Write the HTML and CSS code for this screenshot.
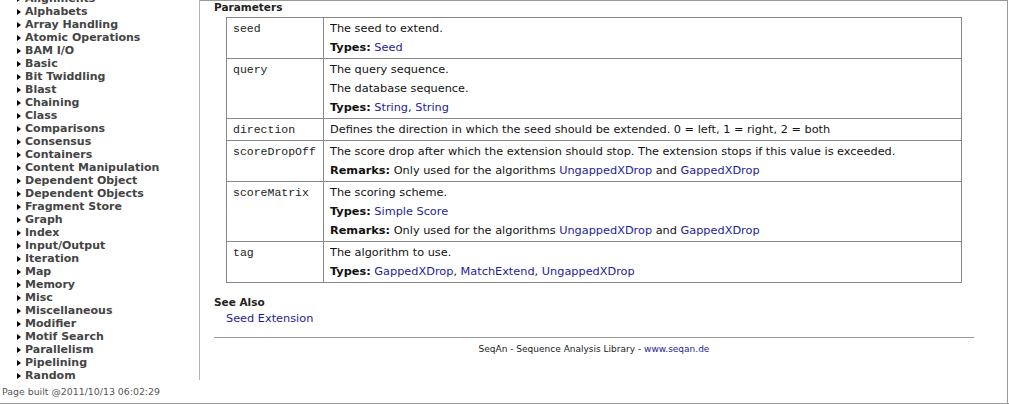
FILE: index.html
```html
<!DOCTYPE html>
<html>
<head>
<meta charset="utf-8">
<link rel="stylesheet" href="styles.css">
</head>
<body>
<div class="page">
  <div class="sidebar">
    <div class="navbox">
      <ul class="nav">
        <li>Alignments</li>
        <li>Alphabets</li>
        <li>Array Handling</li>
        <li>Atomic Operations</li>
        <li>BAM I/O</li>
        <li>Basic</li>
        <li>Bit Twiddling</li>
        <li>Blast</li>
        <li>Chaining</li>
        <li>Class</li>
        <li>Comparisons</li>
        <li>Consensus</li>
        <li>Containers</li>
        <li>Content Manipulation</li>
        <li>Dependent Object</li>
        <li>Dependent Objects</li>
        <li>Fragment Store</li>
        <li>Graph</li>
        <li>Index</li>
        <li>Input/Output</li>
        <li>Iteration</li>
        <li>Map</li>
        <li>Memory</li>
        <li>Misc</li>
        <li>Miscellaneous</li>
        <li>Modifier</li>
        <li>Motif Search</li>
        <li>Parallelism</li>
        <li>Pipelining</li>
        <li>Random</li>
      </ul>
    </div>
    <div class="built">Page built @2011/10/13 06:02:29</div>
  </div>
  <div class="main">
    <h3 class="heading">Parameters</h3>
    <table class="params">
      <tr>
        <td class="name">seed</td>
        <td class="desc"><p>The seed to extend.</p><p><b>Types:</b> <a href="#">Seed</a></p></td>
      </tr>
      <tr>
        <td class="name">query</td>
        <td class="desc"><p>The query sequence.</p><p>The database sequence.</p><p><b>Types:</b> <a href="#">String</a>, <a href="#">String</a></p></td>
      </tr>
      <tr>
        <td class="name">direction</td>
        <td class="desc"><p>Defines the direction in which the seed should be extended. 0 = left, 1 = right, 2 = both</p></td>
      </tr>
      <tr>
        <td class="name">scoreDropOff</td>
        <td class="desc"><p>The score drop after which the extension should stop. The extension stops if this value is exceeded.</p><p><b>Remarks:</b> Only used for the algorithms <a href="#">UngappedXDrop</a> and <a href="#">GappedXDrop</a></p></td>
      </tr>
      <tr>
        <td class="name">scoreMatrix</td>
        <td class="desc"><p>The scoring scheme.</p><p><b>Types:</b> <a href="#">Simple Score</a></p><p><b>Remarks:</b> Only used for the algorithms <a href="#">UngappedXDrop</a> and <a href="#">GappedXDrop</a></p></td>
      </tr>
      <tr>
        <td class="name">tag</td>
        <td class="desc"><p>The algorithm to use.</p><p><b>Types:</b> <a href="#">GappedXDrop</a>, <a href="#">MatchExtend</a>, <a href="#">UngappedXDrop</a></p></td>
      </tr>
    </table>
    <h3 class="heading seealso">See Also</h3>
    <div class="seelinks"><a href="#">Seed Extension</a></div>
    <div class="footer">SeqAn - Sequence Analysis Library - <a href="#">www.seqan.de</a></div>
  </div>
</div>
</body>
</html>
```

FILE: styles.css
```css
html, body {
  margin: 0;
  padding: 0;
  background: #fff;
}
body {
  font-family: "DejaVu Sans", Verdana, sans-serif;
  font-size: 11.3px;
  color: #111;
}
a {
  color: #1c1c9c;
  text-decoration: none;
}
.page {
  display: flex;
  height: 404px;
  box-sizing: border-box;
  border-bottom: 1px solid #9a9a9a;
  overflow: hidden;
}
.sidebar {
  width: 200px;
  flex: none;
  display: flex;
  flex-direction: column;
}
.navbox {
  height: 380px;
  border-right: 1px solid #b4b4b4;
}
.nav {
  list-style: none;
  margin: -8px 0 0 0;
  padding: 0 0 0 17px;
}
.nav li {
  font-weight: bold;
  color: #444;
  font-size: 11px;
  line-height: 13px;
  height: 13px;
  white-space: nowrap;
  display: flex;
  align-items: center;
}
.nav li::before {
  content: "";
  display: block;
  width: 0;
  height: 0;
  border-left: 4px solid #000;
  border-top: 3.5px solid transparent;
  border-bottom: 3.5px solid transparent;
  margin-right: 4px;
}
.built {
  color: #555;
  font-size: 9.4px;
  padding: 6px 0 0 2px;
  white-space: nowrap;
}
.main {
  flex: 1;
  border-top: 1px solid #999;
  border-right: 1px solid #999;
  margin-right: 1px;
  padding: 0 0 0 14px;
  box-sizing: border-box;
}
.heading {
  margin: 0;
  font-size: 10.5px;
  line-height: 12px;
  font-weight: bold;
  color: #222;
}
.params {
  border-collapse: collapse;
  margin: 4px 0 0 12px;
  width: 736px;
}
.params td {
  border: 1px solid #888;
  vertical-align: top;
  padding: 4px 6px 3px 6px;
  line-height: 14px;
}
.params td.name {
  width: 84px;
  font-family: "Liberation Mono", "Courier New", monospace;
  font-size: 11.5px;
  color: #222;
}
.params p {
  margin: 0 0 5px 0;
}
.params p:last-child {
  margin-bottom: 0;
}
.seealso {
  margin-top: 13px;
}
.seelinks {
  padding: 4px 0 0 12px;
  line-height: 14px;
}
.footer {
  width: 760px;
  margin-top: 11px;
  border-top: 1px solid #999;
  text-align: center;
  font-size: 9px;
  padding-top: 6px;
  color: #222;
}
```
